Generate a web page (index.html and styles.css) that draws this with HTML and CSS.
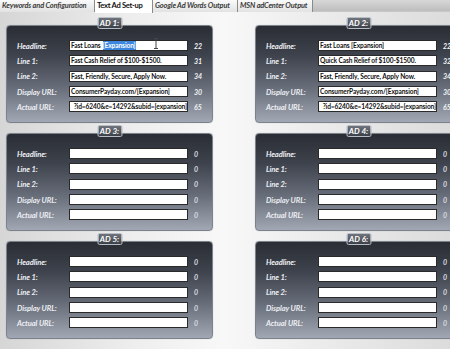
FILE: index.html
```html
<!DOCTYPE html>
<html>
<head>
<meta charset="utf-8">
<link rel="stylesheet" href="styles.css">
</head>
<body>
<div class="tabs">
  <div class="tab t1">Keywords and Configuration</div>
  <div class="tab t2 active">Text Ad Set-up</div>
  <div class="tab t3">Google Ad Words Output</div>
  <div class="tab t4">MSN adCenter Output</div>
  <div class="tab-rest"></div>
</div>
<div class="grid">
  <div class="panel">
    <div class="badge">AD 1:</div>
    <div class="row"><span class="label">Headline:</span><div class="field">Fast Loans <span class="sel">[Expansion]</span></div><span class="num">22</span></div>
    <div class="row"><span class="label">Line 1:</span><div class="field">Fast Cash Relief of $100-$1500.</div><span class="num">31</span></div>
    <div class="row"><span class="label">Line 2:</span><div class="field">Fast, Friendly, Secure, Apply Now.</div><span class="num">34</span></div>
    <div class="row"><span class="label">Display URL:</span><div class="field">ConsumerPayday.com/[Expansion]</div><span class="num">30</span></div>
    <div class="row"><span class="label">Actual URL:</span><div class="field end">?id=6240&amp;e=14292&amp;subid=[expansion]</div><span class="num">65</span></div>
    <svg class="ibeam" width="6" height="11" viewBox="0 0 6 11"><path d="M1 0.5h4M1 10.5h4M3 0.5v10" stroke="#444" stroke-width="1" fill="none"/></svg>
  </div>
  <div class="panel">
    <div class="badge">AD 2:</div>
    <div class="row"><span class="label">Headline:</span><div class="field">Fast Loans [Expansion]</div><span class="num">22</span></div>
    <div class="row"><span class="label">Line 1:</span><div class="field">Quick Cash Relief of $100-$1500.</div><span class="num">32</span></div>
    <div class="row"><span class="label">Line 2:</span><div class="field">Fast, Friendly, Secure, Apply Now.</div><span class="num">34</span></div>
    <div class="row"><span class="label">Display URL:</span><div class="field">ConsumerPayday.com/[Expansion]</div><span class="num">30</span></div>
    <div class="row"><span class="label">Actual URL:</span><div class="field end">?id=6240&amp;e=14292&amp;subid=[expansion]</div><span class="num">65</span></div>
  </div>
  <div class="panel">
    <div class="badge">AD 3:</div>
    <div class="row"><span class="label">Headline:</span><div class="field"></div><span class="num dim">0</span></div>
    <div class="row"><span class="label">Line 1:</span><div class="field"></div><span class="num dim">0</span></div>
    <div class="row"><span class="label">Line 2:</span><div class="field"></div><span class="num dim">0</span></div>
    <div class="row"><span class="label">Display URL:</span><div class="field"></div><span class="num dim">0</span></div>
    <div class="row"><span class="label">Actual URL:</span><div class="field"></div><span class="num dim">0</span></div>
  </div>
  <div class="panel">
    <div class="badge">AD 4:</div>
    <div class="row"><span class="label">Headline:</span><div class="field"></div><span class="num dim">0</span></div>
    <div class="row"><span class="label">Line 1:</span><div class="field"></div><span class="num dim">0</span></div>
    <div class="row"><span class="label">Line 2:</span><div class="field"></div><span class="num dim">0</span></div>
    <div class="row"><span class="label">Display URL:</span><div class="field"></div><span class="num dim">0</span></div>
    <div class="row"><span class="label">Actual URL:</span><div class="field"></div><span class="num dim">0</span></div>
  </div>
  <div class="panel">
    <div class="badge">AD 5:</div>
    <div class="row"><span class="label">Headline:</span><div class="field"></div><span class="num dim">0</span></div>
    <div class="row"><span class="label">Line 1:</span><div class="field"></div><span class="num dim">0</span></div>
    <div class="row"><span class="label">Line 2:</span><div class="field"></div><span class="num dim">0</span></div>
    <div class="row"><span class="label">Display URL:</span><div class="field"></div><span class="num dim">0</span></div>
    <div class="row"><span class="label">Actual URL:</span><div class="field"></div><span class="num dim">0</span></div>
  </div>
  <div class="panel">
    <div class="badge">AD 6:</div>
    <div class="row"><span class="label">Headline:</span><div class="field"></div><span class="num dim">0</span></div>
    <div class="row"><span class="label">Line 1:</span><div class="field"></div><span class="num dim">0</span></div>
    <div class="row"><span class="label">Line 2:</span><div class="field"></div><span class="num dim">0</span></div>
    <div class="row"><span class="label">Display URL:</span><div class="field"></div><span class="num dim">0</span></div>
    <div class="row"><span class="label">Actual URL:</span><div class="field"></div><span class="num dim">0</span></div>
  </div>
</div>
</body>
</html>
```
FILE: styles.css
```css
html, body {
  margin: 0;
  padding: 0;
  width: 450px;
  height: 349px;
  overflow: hidden;
}
body {
  background: linear-gradient(to right, #d6d6d6 0%, #eeeeee 30%, #f8f8f8 50%, #ececec 70%, #dcdcdc 100%);
  font-family: Lato, "Open Sans", sans-serif;
}
.tabs {
  display: flex;
  height: 12px;
  background: linear-gradient(to bottom, #d8d8d8, #bdbdbd);
  border-bottom: 1px solid #c8c8c8;
  box-sizing: border-box;
}
.tab {
  box-sizing: border-box;
  height: 12px;
  font-size: 7.4px;
  line-height: 11px;
  font-style: italic;
  font-weight: 700;
  color: #3a3a3a;
  padding-left: 2px;
  white-space: nowrap;
  overflow: hidden;
  background: linear-gradient(to bottom, #fafafa, #e2e2e2);
  border-right: 1px solid #8a8a8a;
  letter-spacing: -0.15px;
}
.t1 { width: 95px; }
.t2 { width: 58px; }
.t3 { width: 85px; }
.t4 { width: 75px; }
.tab.active {
  background: #ffffff;
  font-style: normal;
  color: #111;
  height: 13px;
  letter-spacing: -0.3px;
  font-size: 7.6px;
}
.tab-rest { flex: 1; }
.grid {
  display: grid;
  grid-template-columns: 207px 207px;
  column-gap: 42px;
  row-gap: 10px;
  padding: 13px 0 0 6px;
}
.panel {
  position: relative;
  box-sizing: border-box;
  height: 98px;
  padding: 14px 0 0 10px;
  border-radius: 4px;
  border: 1px solid #7c828c;
  background: linear-gradient(to bottom, #2a2d34 0%, #3d424c 30%, #686e7a 65%, #a1a7b3 100%);
  display: flex;
  flex-direction: column;
  gap: 4.35px;
  box-shadow: 0 0 1px rgba(0,0,0,0.3);
}
.badge {
  position: absolute;
  top: -9px;
  left: 50%;
  transform: translateX(-50%);
  width: 25px;
  height: 12px;
  box-sizing: border-box;
  border: 1px solid #b8bcc4;
  border-radius: 2px;
  background: linear-gradient(to bottom, #70747c, #3c4048);
  color: #ffffff;
  font-size: 8px;
  font-weight: 700;
  font-style: italic;
  line-height: 10px;
  text-align: center;
  white-space: nowrap;
}
.row {
  display: flex;
  align-items: center;
  height: 11px;
}
.label {
  width: 52px;
  flex: none;
  color: #eceef3;
  font-size: 7.6px;
  font-weight: 700;
  font-style: italic;
  white-space: nowrap;
  letter-spacing: -0.1px;
}
.field {
  box-sizing: border-box;
  width: 119px;
  height: 11px;
  flex: none;
  background: #ffffff;
  border: 1px solid #2a2a2a;
  font-size: 6.6px;
  font-weight: 700;
  line-height: 8px;
  color: #111;
  padding: 0 1px;
  white-space: nowrap;
  overflow: hidden;
  display: flex;
  letter-spacing: -0.1px;
}
.field.end {
  justify-content: flex-end;
  padding: 0;
}
.sel {
  background: #3b87e0;
  color: #ffffff;
  margin-left: 2px;
}
.num {
  margin-left: 6px;
  color: #f4f4f4;
  font-size: 7px;
  font-weight: 700;
  font-style: italic;
}
.num.dim {
  color: #d8dbe0;
}
.ibeam {
  position: absolute;
  left: 146px;
  top: 12px;
}
```
